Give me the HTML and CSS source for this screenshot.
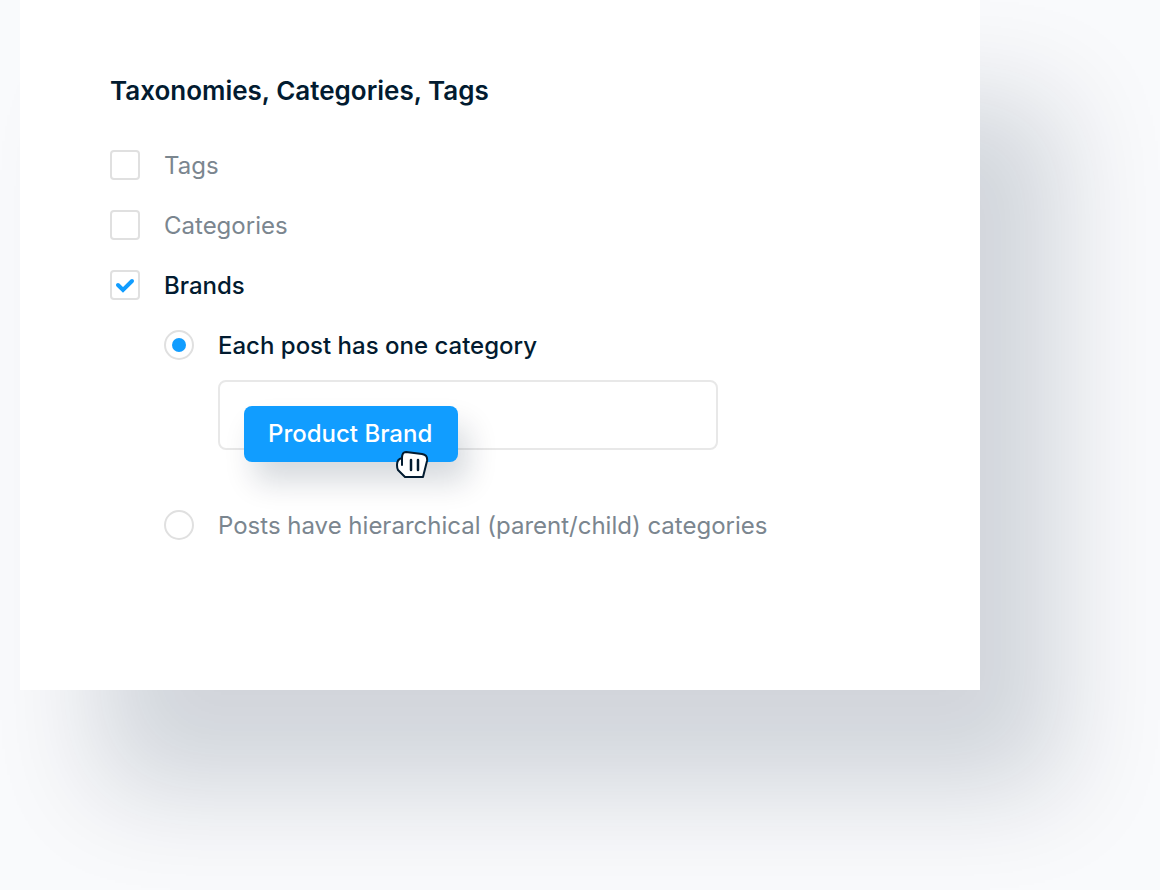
FILE: index.html
```html
<!DOCTYPE html>
<html lang="en">
<head>
  <meta charset="UTF-8" />
  <title>Taxonomies, Categories, Tags</title>
  <link rel="stylesheet" href="styles.css">
</head>
<body>

<form class="panel">
  <h1>Taxonomies, Categories, Tags</h1>

  <div class="options">
    <label class="option"><input type="checkbox" name="tags" /> <span>Tags</span></label>
    <label class="option"><input type="checkbox" name="categories" /> <span>Categories</span></label>
    <label class="option"><input type="checkbox" name="brands" checked /> <span>Brands</span></label>

    <div class="suboptions">
      <label class="option"><input type="radio" name="structure" value="single" checked /> <span>Each post has one category</span></label>
      <div class="dropzone">
        <button type="button" class="chip">Product Brand
          <svg class="grab" width="34" height="30" viewBox="0 0 34 30" aria-hidden="true">
            <path d="M7 8 Q7 2 11 2 L27 4 Q33 5 32 11 L28 27 H10 L3 20 Q2 18 2 15 Q2 9 7 8 Z" fill="#fff" stroke="#021b30" stroke-width="2" stroke-linejoin="round" />
            <path d="M7 7v8" fill="none" stroke="#021b30" stroke-width="2" stroke-linecap="round" />
            <path d="M16 10v10M23 10v10" fill="none" stroke="#021b30" stroke-width="2.5" stroke-linecap="round" />
          </svg>
        </button>
      </div>
      <label class="option"><input type="radio" name="structure" value="tree" /> <span>Posts have hierarchical (parent/child) categories</span></label>
    </div>
  </div>
</form>

</body>
</html>
```
FILE: styles.css
```css
* {
  box-sizing: border-box;
}
body {
  margin: 0;
  min-height: 100vh;
  padding: 0 180px 200px 20px;
  display: flex;
  background: #f9fafc;
  color: #021b30;
  font-family: Inter, "Liberation Sans", sans-serif;
  font-size: 24px;
  line-height: 32px;
  overflow: hidden;
}
.panel {
  flex: 1;
  padding: 75px 90px 0;
  background: #fff;
  box-shadow: 80px 100px 100px rgba(2, 27, 48, 0.16);
}
h1 {
  margin: 0 0 43px;
  font-size: 26px;
  line-height: 32px;
  font-weight: 600;
}
.options,
.suboptions {
  display: flex;
  flex-direction: column;
  gap: 30px;
}
.suboptions {
  padding-left: 54px;
}
.option {
  display: flex;
  gap: 24px;
  min-height: 30px;
  margin-bottom: -2px;
  color: #7b868f;
}
.option:has(input:checked) {
  color: #021b30;
  font-weight: 500;
}
.option input {
  appearance: none;
  flex: none;
  display: grid;
  place-items: center;
  width: 30px;
  height: 30px;
  margin: 0;
  border: 2px solid #e0e0e0;
  border-radius: 4px;
  background: #fff;
}
.option input[type="radio"] {
  border-radius: 50%;
}
.option input[type="checkbox"]:checked {
  background: #fff url("data:image/svg+xml,%3Csvg xmlns='http://www.w3.org/2000/svg' viewBox='0 0 26 26'%3E%3Cpath d='M6 13l5 5 9-9' fill='none' stroke='%23119dff' stroke-width='4' stroke-linecap='round'/%3E%3C/svg%3E") center / 26px no-repeat;
}
.option input[type="radio"]:checked::before {
  content: "";
  width: 14px;
  height: 14px;
  border-radius: 50%;
  background: #119dff;
}
.dropzone {
  width: 500px;
  max-width: 100%;
  height: 70px;
  margin: -10px 0 30px 54px;
  padding: 24px;
  border: 2px solid #e8e8e8;
  border-radius: 8px;
}
.chip {
  position: relative;
  height: 56px;
  padding: 0 26px 0 24px;
  border: 0;
  border-radius: 8px;
  background: #119dff;
  box-shadow: 10px 20px 30px rgba(2, 27, 48, 0.16);
  color: #fff;
  font: inherit;
  font-weight: 500;
  white-space: nowrap;
}
.grab {
  position: absolute;
  right: 29px;
  bottom: -18px;
}
```
